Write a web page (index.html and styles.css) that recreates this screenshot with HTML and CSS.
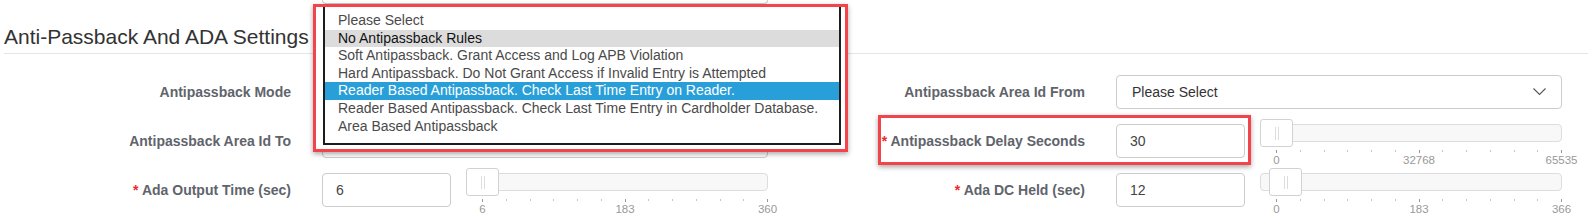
FILE: index.html
```html
<!DOCTYPE html>
<html lang="en">
	<head>
		<meta charset="UTF-8" />
		<meta name="viewport" content="width=device-width, initial-scale=1.0" />
		<title>Anti-Passback And ADA Settings</title>
		<link rel="stylesheet" href="styles.css">
	</head>
	<body>
		<div class="page">
			<div class="prev-control"></div>
			<h3 class="section-title">Anti-Passback And ADA Settings</h3>

			<div class="form-grid">
				<div class="field">
					<label class="field-label">Antipassback Mode</label>
					<!-- covered by the open list below -->
					<div class="select-box"></div>
				</div>
				<div class="field">
					<label class="field-label">Antipassback Area Id From</label>
					<div class="select-box">
						<span>Please Select</span>
						<svg class="chevron" width="13" height="8" viewBox="0 0 13 8"><polyline points="0.5,0.5 6.5,6.5 12.5,0.5" fill="none" stroke="#555" stroke-width="1.1" /></svg>
					</div>
				</div>

				<div class="field">
					<label class="field-label">Antipassback Area Id To</label>
					<div class="text-box"></div>
				</div>
				<div class="field">
					<label class="field-label"><span class="req">*</span> Antipassback Delay Seconds</label>
					<div class="control-slider">
						<div class="text-box small">30</div>
						<div class="slider">
							<div class="slider-track"><div class="slider-handle" style="left: 0px"><i></i><i></i></div></div>
							<div class="slider-ticks">
								<b></b><i></i><i></i><i></i><i></i><i></i><b></b><i></i><i></i><i></i><i></i><i></i><b></b>
							</div>
							<div class="slider-labels"><span>0</span><span>32768</span><span>65535</span></div>
						</div>
					</div>
				</div>

				<div class="field">
					<label class="field-label"><span class="req">*</span> Ada Output Time (sec)</label>
					<div class="control-slider">
						<div class="text-box small">6</div>
						<div class="slider">
							<div class="slider-track"><div class="slider-handle" style="left: 0px"><i></i><i></i></div></div>
							<div class="slider-ticks">
								<b></b><i></i><i></i><i></i><i></i><i></i><b></b><i></i><i></i><i></i><i></i><i></i><b></b>
							</div>
							<div class="slider-labels"><span>6</span><span>183</span><span>360</span></div>
						</div>
					</div>
				</div>
				<div class="field">
					<label class="field-label"><span class="req">*</span> Ada DC Held (sec)</label>
					<div class="control-slider">
						<div class="text-box small">12</div>
						<div class="slider">
							<div class="slider-track"><div class="slider-handle" style="left: 9px"><i></i><i></i></div></div>
							<div class="slider-ticks">
								<b></b><i></i><i></i><i></i><i></i><i></i><b></b><i></i><i></i><i></i><i></i><i></i><b></b>
							</div>
							<div class="slider-labels"><span>0</span><span>183</span><span>366</span></div>
						</div>
					</div>
				</div>
			</div>

			<!-- highlighted open dropdown of Antipassback Mode -->
			<div class="mark mark-dropdown">
				<ul class="listbox">
					<li>Please Select</li>
					<li class="hover">No Antipassback Rules</li>
					<li>Soft Antipassback. Grant Access and Log APB Violation</li>
					<li>Hard Antipassback. Do Not Grant Access if Invalid Entry is Attempted</li>
					<li class="selected">Reader Based Antipassback. Check Last Time Entry on Reader.</li>
					<li>Reader Based Antipassback. Check Last Time Entry in Cardholder Database.</li>
					<li>Area Based Antipassback</li>
				</ul>
			</div>
			<div class="mark mark-delay"></div>
		</div>
	</body>
</html>
```

FILE: styles.css
```css
* {
	box-sizing: border-box;
}
body {
	margin: 0;
	background-color: #fff;
	font-family: "Liberation Sans", Arial, Helvetica, sans-serif;
	font-size: 14px;
	color: #333;
}
.page {
	position: relative;
	width: 1588px;
	height: 222px;
	overflow: hidden;
}
.prev-control {
	width: 446px;
	height: 4px;
	margin-left: 322px;
	border: 1px solid #ccc;
	border-top: 0;
	border-radius: 0 0 4px 4px;
}
.section-title {
	margin: 0 0 0 4px;
	padding-top: 21px;
	height: 50px;
	font-size: 21px;
	font-weight: normal;
	line-height: 24px;
	color: #333;
	border-bottom: 1px solid #e5e5e5;
}
.form-grid {
	display: grid;
	grid-template-columns: 794px 794px;
	grid-auto-rows: 34px;
	row-gap: 15px;
	margin-top: 21px;
}
.field {
	display: grid;
	grid-template-columns: 291px 446px;
	column-gap: 31px;
	align-items: center;
}
.field-label {
	text-align: right;
	font-weight: bold;
	font-size: 14px;
	color: #5f646c;
	white-space: nowrap;
}
.req {
	color: #f0282d;
}
.select-box,
.text-box {
	display: flex;
	align-items: center;
	height: 34px;
	padding: 0 13px 0 15px;
	border: 1px solid #ccc;
	border-radius: 4px;
	background: #fff;
	color: #333;
}
.select-box {
	justify-content: space-between;
}
.chevron {
	margin-right: 2px;
}
.text-box.small {
	width: 129px;
	padding-left: 13px;
	color: #444;
}
.control-slider {
	display: flex;
	gap: 15px;
	height: 34px;
}
.slider {
	flex: 1;
}
.slider-track {
	position: relative;
	height: 18px;
	background: #f8f8f8;
	border: 1px solid #ddd;
	border-radius: 4px;
}
.slider-handle {
	position: absolute;
	top: -6px;
	width: 33px;
	height: 28px;
	margin-left: -1px;
	background: #fff;
	border: 1px solid #d2d2d2;
	border-radius: 3px;
	display: flex;
	justify-content: center;
	align-items: center;
	gap: 2px;
}
.slider-handle i {
	width: 1px;
	height: 13px;
	background: #ddd;
}
.slider-ticks {
	display: flex;
	justify-content: space-between;
	align-items: flex-start;
	margin: 8px 0 0 16px;
	height: 3px;
}
.slider-ticks b {
	width: 1px;
	height: 3px;
	background: #999;
}
.slider-ticks i {
	width: 1px;
	height: 2px;
	background: #c4c4c4;
}
.slider-labels {
	display: flex;
	justify-content: space-between;
	margin: 1px 0 0 16px;
	font-size: 11.5px;
	line-height: 13px;
	color: #999;
}
.slider-labels span {
	width: 1px;
	display: flex;
	justify-content: center;
	white-space: nowrap;
}
.mark {
	position: absolute;
	border: 3px solid #f2444a;
	box-shadow: 0 2px 5px rgba(0, 0, 0, 0.35);
}
.mark-dropdown {
	left: 313px;
	top: 4px;
	width: 535px;
	height: 148px;
	padding: 0 4px 4px 7px;
	background: #fff;
}
.mark-delay {
	left: 878px;
	top: 115px;
	width: 373px;
	height: 50px;
}
.listbox {
	list-style: none;
	margin: 0;
	padding: 5px 0 0;
	height: 100%;
	background: #fff;
	border: 2px solid #1c1c1c;
	border-top: 0;
}
.listbox li {
	height: 17.6px;
	line-height: 17.6px;
	padding-left: 13px;
	color: #4a4a4a;
	white-space: nowrap;
}
.listbox li.hover {
	background: #dcdcdc;
	color: #111;
}
.listbox li.selected {
	background: #299fd9;
	color: #fff;
}
```
